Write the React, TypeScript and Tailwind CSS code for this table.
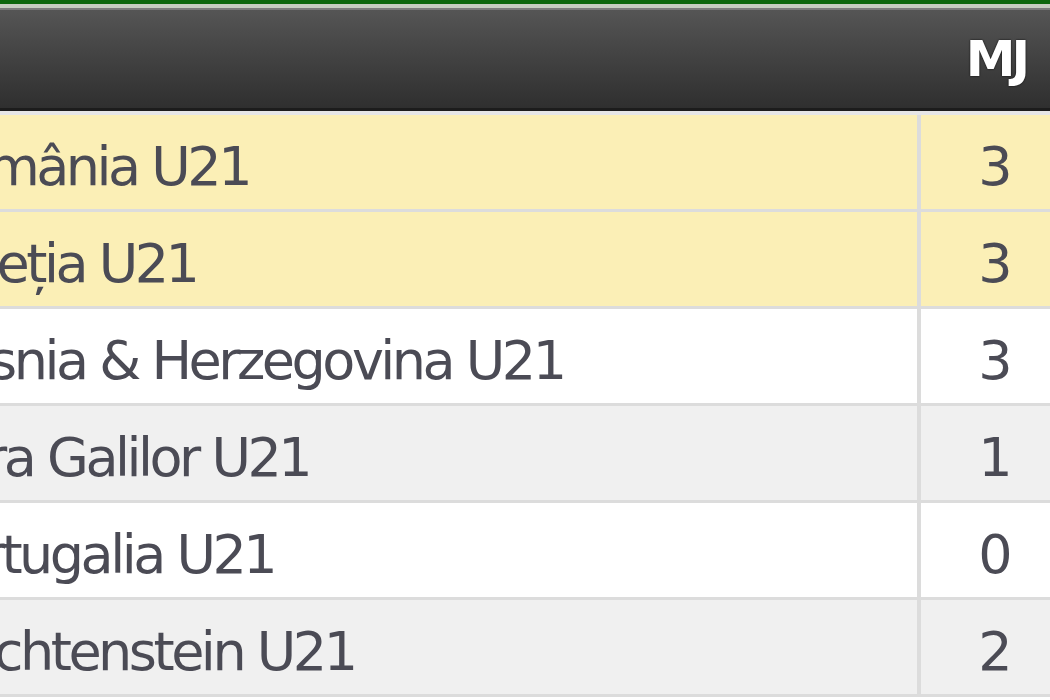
const rows = [
  { name: "România U21", mj: 3, bg: "bg-[#fbefb6]" },
  { name: "Elveția U21", mj: 3, bg: "bg-[#fbefb6]" },
  { name: "Bosnia & Herzegovina U21", mj: 3, bg: "bg-white" },
  { name: "Țara Galilor U21", mj: 1, bg: "bg-[#f0f0f0]" },
  { name: "Portugalia U21", mj: 0, bg: "bg-white" },
  { name: "Liechtenstein U21", mj: 2, bg: "bg-[#f0f0f0]" },
];

export default function App() {
  return (
    <div className="w-[1050px] h-[700px] overflow-hidden bg-white font-['DejaVu_Sans',sans-serif]">
      {/* top bar */}
      <div className="h-[4px] bg-[#0c660c]" />
      <div className="h-[4px] bg-[#c6ccc0]" />
      <div className="h-[2px] bg-[#7a7a7a]" />
      <div className="flex h-[101px] bg-gradient-to-b from-[#555555] to-[#2f2f2f] border-b-[3px] border-[#1c1c1c]">
        <div className="flex-1" />
        <div className="w-[130px] pl-[22px] flex items-center justify-center text-white font-bold text-[50px] tracking-[-4px] [text-shadow:0_0_2px_#000]">
          MJ
        </div>
      </div>
      <div className="h-[4px] bg-[#e6e6e6]" />
      {rows.map((r) => (
        <div key={r.name} className={`flex h-[97px] border-b-[3px] border-[#dcdcdc] ${r.bg}`}>
          <div className="flex-1 overflow-hidden flex items-center pt-[8px]">
            <span className="-ml-[74px] whitespace-nowrap text-[54px] text-[#4b4b55] tracking-[-3.5px]">{r.name}</span>
          </div>
          <div className="w-[133px] pl-[20px] pt-[8px] border-l-[4px] border-[#dcdcdc] flex items-center justify-center text-[54px] text-[#4b4b55]">
            {r.mj}
          </div>
        </div>
      ))}
    </div>
  );
}
